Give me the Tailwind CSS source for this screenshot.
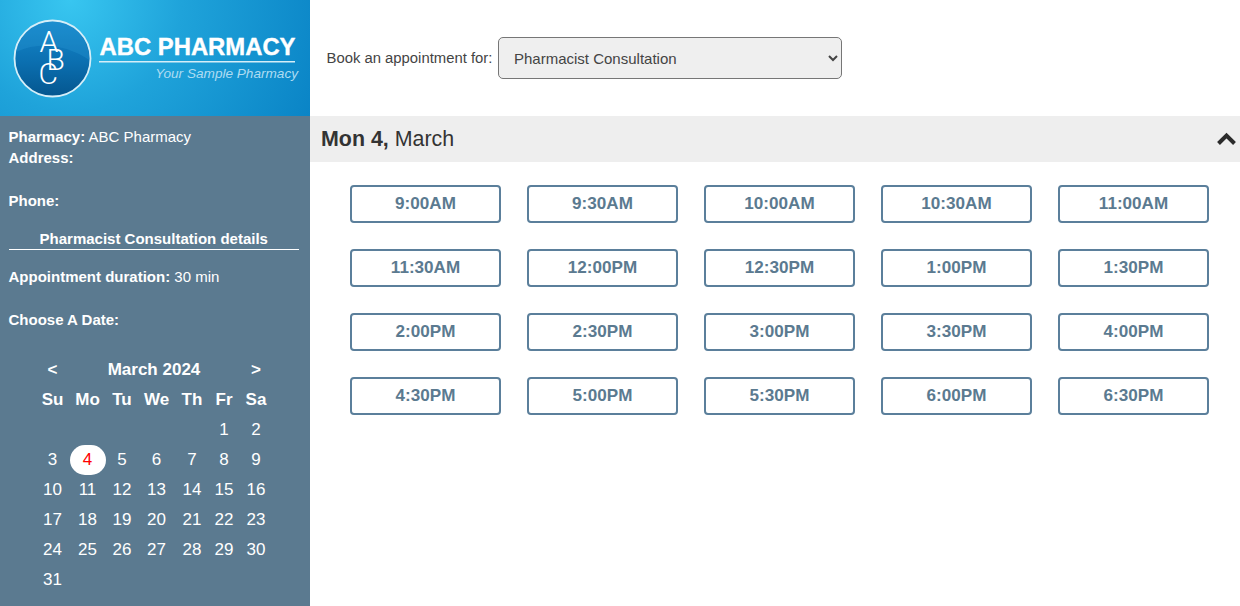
<!DOCTYPE html>
<html lang="en">
<head>
<meta charset="utf-8">
<title>ABC Pharmacy</title>
<script src="https://cdn.jsdelivr.net/npm/@tailwindcss/browser@4"></script>
</head>
<body class="font-['Liberation_Sans',Arial,sans-serif] bg-white overflow-hidden">
<div class="flex w-[1240px] h-[606px]">

  <!-- left column -->
  <aside class="w-[310px] shrink-0 bg-[#5b7a90] text-white">
    <div class="h-[116px] bg-[radial-gradient(circle_at_70px_0px,#38c6f0_0%,#1fa3da_42%,#0a84c6_100%)]">
      <svg width="310" height="116" viewBox="0 0 310 116">
        <defs>
          <linearGradient id="ball" x1="0" y1="0" x2="0" y2="1">
            <stop offset="0" stop-color="#1689cc"/>
            <stop offset="0.55" stop-color="#0b6fb0"/>
            <stop offset="1" stop-color="#04568f"/>
          </linearGradient>
        </defs>
        <circle cx="52.500" cy="58.500" r="38" fill="url(#ball)" stroke="#d5eef8" stroke-width="1.800"/>
        <path d="M16 52 Q52 36 89.500 60 Q88.500 40 74.500 29 Q52.500 14 30.500 29 Q17.500 40 16 52Z" fill="#2a9bd8" opacity="0.3"/>
        <text x="39.500" y="52" font-family="Roboto" font-weight="300" font-size="30" fill="#fff">A</text>
        <text x="46.500" y="70" font-family="Roboto" font-weight="300" font-size="30" fill="#fff">B</text>
        <text x="38.500" y="84" font-family="Roboto" font-weight="300" font-size="30" fill="#fff">C</text>
        <text x="99.500" y="55" font-family="Liberation Sans" font-size="24" font-weight="700" fill="#fff" stroke="#fff" stroke-width="0.400" textLength="196" lengthAdjust="spacingAndGlyphs">ABC PHARMACY</text>
        <rect x="99" y="61" width="196" height="1.500" fill="#d5eef8"/>
        <text x="298" y="78" text-anchor="end" font-family="Liberation Sans" font-size="13.600" font-style="italic" fill="#aedcf2">Your Sample Pharmacy</text>
      </svg>
    </div>

    <div class="pl-[8.500px] pr-[11px] pt-[10px] text-[15px] leading-[21.300px]">
      <p><b>Pharmacy:</b> ABC Pharmacy</p>
      <p><b>Address:</b></p>
      <p class="mt-[21.300px]"><b>Phone:</b></p>
      <p class="mt-[17px] border-b border-white text-center font-bold">Pharmacist Consultation details</p>
      <p class="mt-[16px]"><b>Appointment duration:</b> 30 min</p>
      <p class="mt-[21.300px]"><b>Choose A Date:</b></p>
    </div>

    <div class="mt-[25px] ml-[35px] w-[239px] text-[17px] leading-[30px] text-center">
      <div class="grid grid-cols-[35px_35px_34px_35px_36px_28px_36px] font-bold">
        <span>&lt;</span><span class="col-span-5">March 2024</span><span>&gt;</span>
        <span>Su</span><span>Mo</span><span>Tu</span><span>We</span><span>Th</span><span>Fr</span><span>Sa</span>
      </div>
      <div class="grid grid-cols-[35px_35px_34px_35px_36px_28px_36px]">
        <span class="col-start-6">1</span><span>2</span>
        <span>3</span><span class="bg-white text-[#ff0000] rounded-full mx-[-0.500px]">4</span><span>5</span><span>6</span><span>7</span><span>8</span><span>9</span>
        <span>10</span><span>11</span><span>12</span><span>13</span><span>14</span><span>15</span><span>16</span>
        <span>17</span><span>18</span><span>19</span><span>20</span><span>21</span><span>22</span><span>23</span>
        <span>24</span><span>25</span><span>26</span><span>27</span><span>28</span><span>29</span><span>30</span>
        <span>31</span>
      </div>
    </div>
  </aside>

  <!-- right column -->
  <main class="flex-1 min-w-0">
    <div class="h-[116px] pl-[16.500px] pt-[37px] flex items-start">
      <label class="w-[166.500px] whitespace-nowrap text-[14.850px] text-[#444] leading-[42px] mr-[5px]">Book an appointment for:</label>
      <select class="w-[344px] h-[42px] pl-[11px] bg-[#efefef] border border-[#767676] rounded-[5px] text-[15px] text-[#444]">
        <option>Pharmacist Consultation</option>
      </select>
    </div>

    <div class="h-[46px] bg-[#eeeeee] pl-[11px] pr-[3px] flex items-center justify-between text-[#333]">
      <span class="text-[21.400px]"><b>Mon 4,</b> March</span>
      <svg width="21" height="14" viewBox="0 0 21 14"><path d="M2.500 11.500 L10.500 3.500 L18.500 11.500" fill="none" stroke="#2b2b2b" stroke-width="4"/></svg>
    </div>

    <div class="pl-[40px] pr-[31px] pt-[23px] grid grid-cols-5 gap-x-[26px] gap-y-[26px] text-[#5b7a90]">
      <button class="h-[38px] border-2 border-[#5b7f9b] rounded-[4px] bg-white text-[17.100px] font-bold">9:00AM</button>
      <button class="h-[38px] border-2 border-[#5b7f9b] rounded-[4px] bg-white text-[17.100px] font-bold">9:30AM</button>
      <button class="h-[38px] border-2 border-[#5b7f9b] rounded-[4px] bg-white text-[17.100px] font-bold">10:00AM</button>
      <button class="h-[38px] border-2 border-[#5b7f9b] rounded-[4px] bg-white text-[17.100px] font-bold">10:30AM</button>
      <button class="h-[38px] border-2 border-[#5b7f9b] rounded-[4px] bg-white text-[17.100px] font-bold">11:00AM</button>
      <button class="h-[38px] border-2 border-[#5b7f9b] rounded-[4px] bg-white text-[17.100px] font-bold">11:30AM</button>
      <button class="h-[38px] border-2 border-[#5b7f9b] rounded-[4px] bg-white text-[17.100px] font-bold">12:00PM</button>
      <button class="h-[38px] border-2 border-[#5b7f9b] rounded-[4px] bg-white text-[17.100px] font-bold">12:30PM</button>
      <button class="h-[38px] border-2 border-[#5b7f9b] rounded-[4px] bg-white text-[17.100px] font-bold">1:00PM</button>
      <button class="h-[38px] border-2 border-[#5b7f9b] rounded-[4px] bg-white text-[17.100px] font-bold">1:30PM</button>
      <button class="h-[38px] border-2 border-[#5b7f9b] rounded-[4px] bg-white text-[17.100px] font-bold">2:00PM</button>
      <button class="h-[38px] border-2 border-[#5b7f9b] rounded-[4px] bg-white text-[17.100px] font-bold">2:30PM</button>
      <button class="h-[38px] border-2 border-[#5b7f9b] rounded-[4px] bg-white text-[17.100px] font-bold">3:00PM</button>
      <button class="h-[38px] border-2 border-[#5b7f9b] rounded-[4px] bg-white text-[17.100px] font-bold">3:30PM</button>
      <button class="h-[38px] border-2 border-[#5b7f9b] rounded-[4px] bg-white text-[17.100px] font-bold">4:00PM</button>
      <button class="h-[38px] border-2 border-[#5b7f9b] rounded-[4px] bg-white text-[17.100px] font-bold">4:30PM</button>
      <button class="h-[38px] border-2 border-[#5b7f9b] rounded-[4px] bg-white text-[17.100px] font-bold">5:00PM</button>
      <button class="h-[38px] border-2 border-[#5b7f9b] rounded-[4px] bg-white text-[17.100px] font-bold">5:30PM</button>
      <button class="h-[38px] border-2 border-[#5b7f9b] rounded-[4px] bg-white text-[17.100px] font-bold">6:00PM</button>
      <button class="h-[38px] border-2 border-[#5b7f9b] rounded-[4px] bg-white text-[17.100px] font-bold">6:30PM</button>
    </div>
  </main>
</div>
</body>
</html>
